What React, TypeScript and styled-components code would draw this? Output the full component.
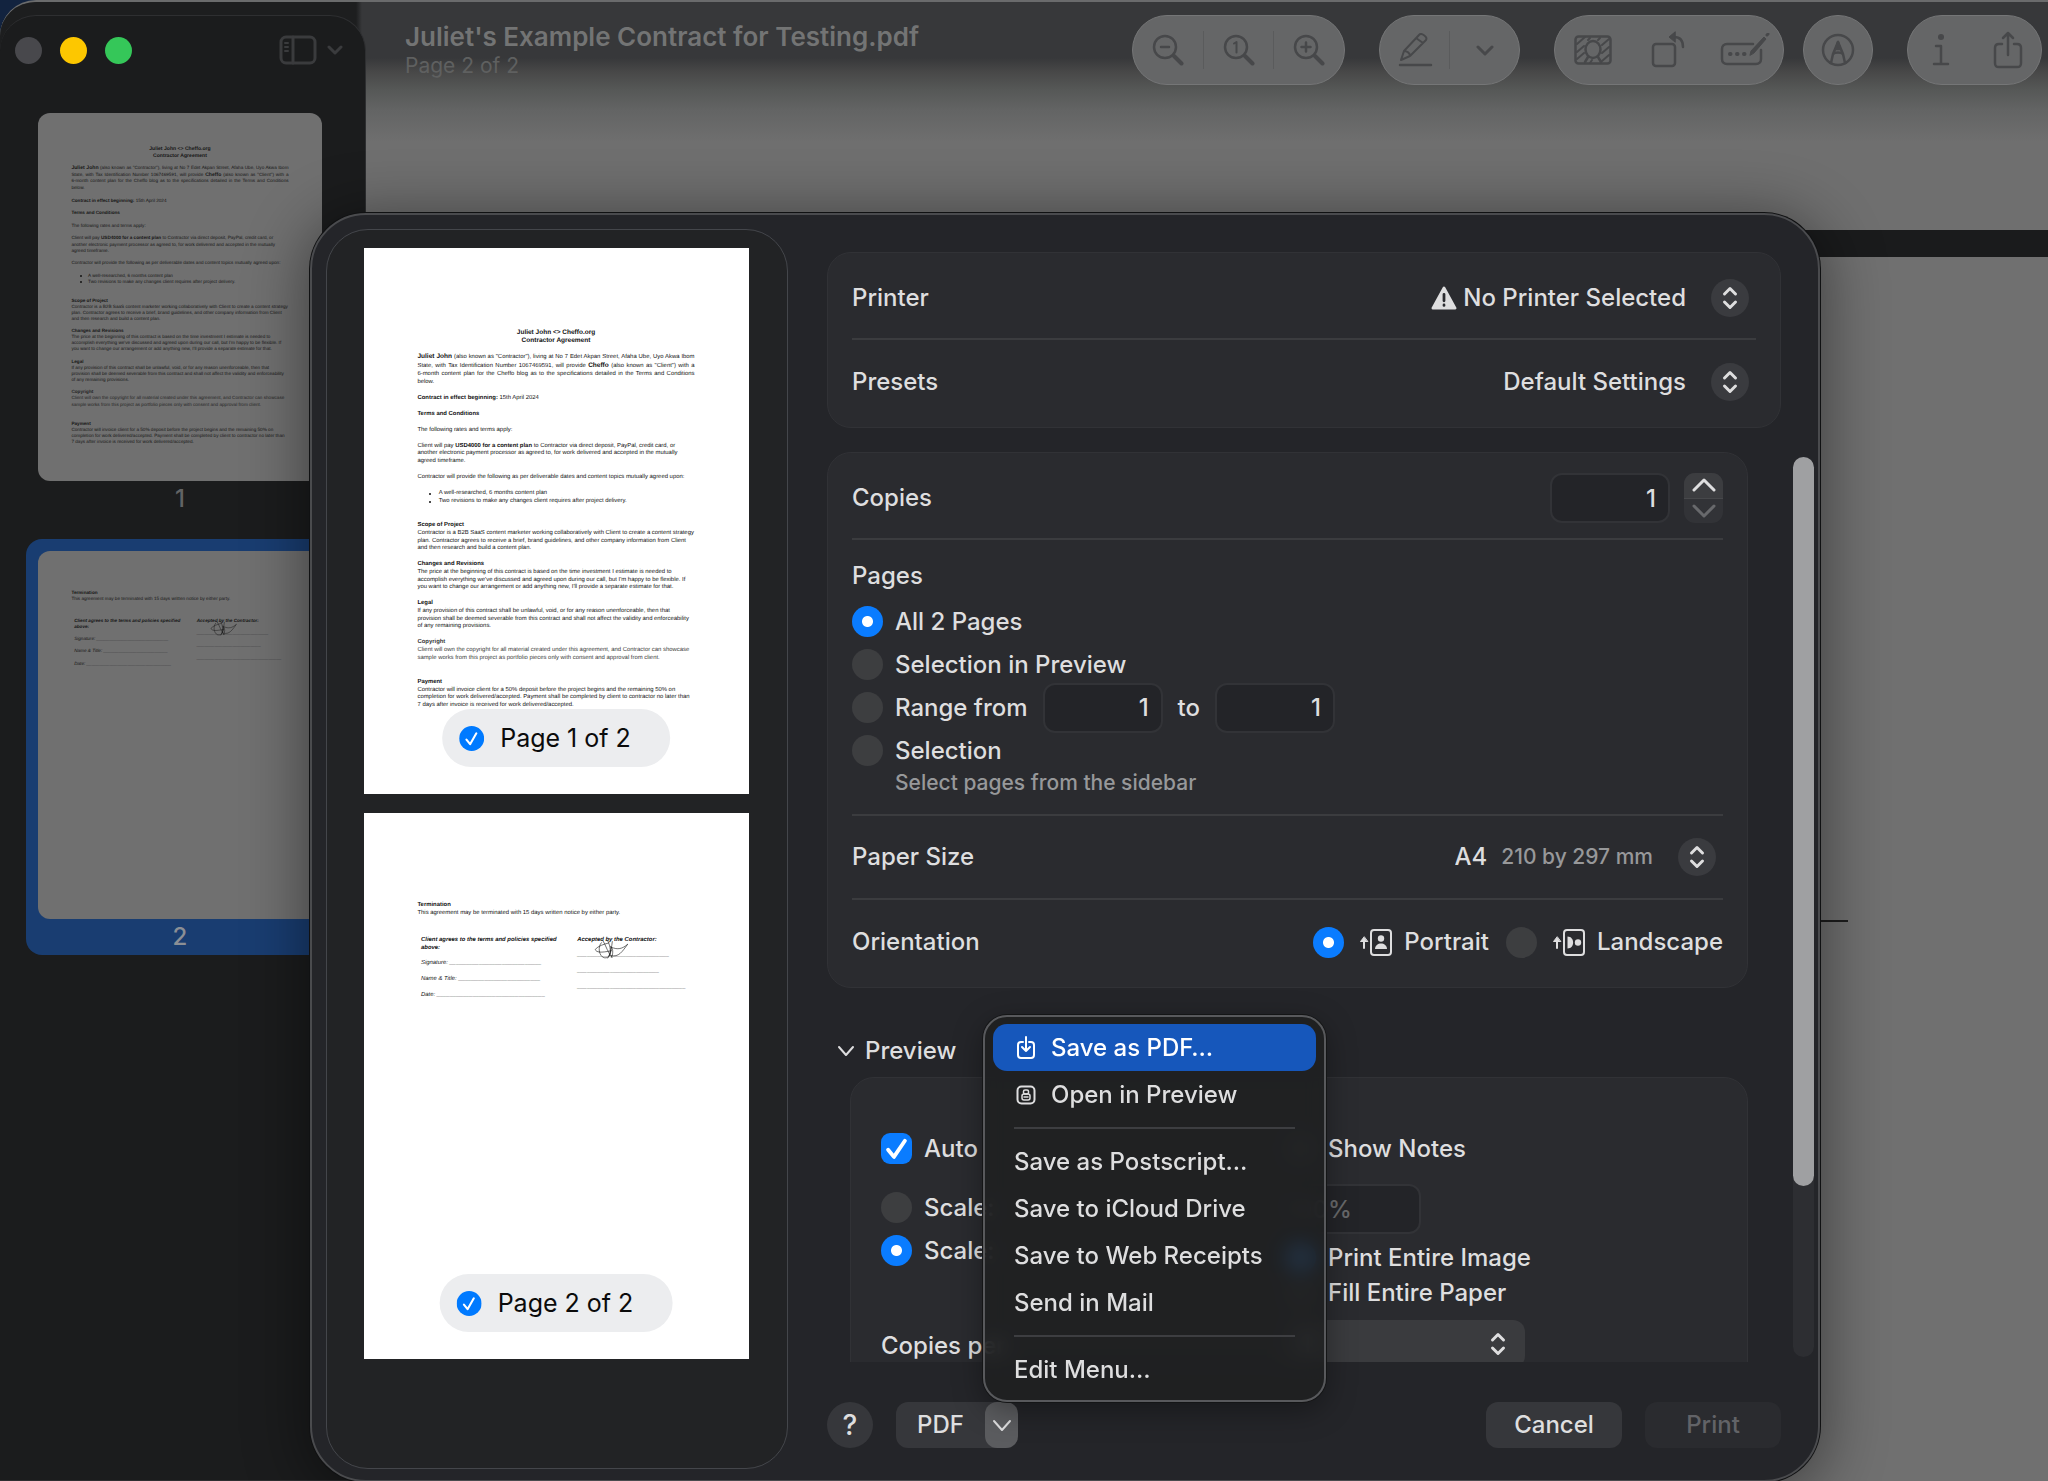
import React from 'react';
import styled, { createGlobalStyle, css } from 'styled-components';

const GlobalStyle = createGlobalStyle`
  *, *::before, *::after { box-sizing: border-box; }
  body { margin: 0; background: #12233f; }
  body, button, input, select {
    font-family: Inter, "Liberation Sans", sans-serif;
    font-size: 24px;
    line-height: 32px;
    font-weight: 500;
    color: #dededf;
  }
  button, input, select { margin: 0; padding: 0; border: 0; background: none; }
  svg { display: block; flex: none; }
`;

/* ---------- window ---------- */

const Screen = styled.div`
  position: relative;
  height: 100vh;
  overflow: hidden;
`;

const Window = styled.div`
  display: flex;
  height: 100%;
  overflow: hidden;
  border-top: 2px solid #6a6b6c;
  border-top-left-radius: 36px;
  background: #6f6f6f;
`;

const SidebarColumn = styled.div`
  flex: 0 0 366px;
  display: flex;
  padding-top: 13px;
  background: linear-gradient(90deg, #1d1e1f 0 356px, transparent 362px), linear-gradient(#37383a 0 58px, #6f6f6f 130px);
`;

const Sidebar = styled.nav`
  flex: 1;
  padding: 20px 0 0 15px;
  border: 1px solid #2e2f31;
  border-left: 0;
  border-radius: 36px 36px 0 0;
  background: #1b1c1d;
  display: flex;
  flex-direction: column;
`;

const SidebarHead = styled.div`
  display: flex;
  align-items: center;
  height: 28px;
  padding-right: 22px;
  gap: 18px;
`;

const Light = styled.button<{ $color: string }>`
  width: 27px;
  height: 27px;
  border-radius: 50%;
  background: ${(p) => p.$color};
`;

const SidebarToggle = styled.button`
  display: flex;
  align-items: center;
  gap: 10px;
  margin-left: auto;
  color: #3a3b3d;
`;

const Thumbs = styled.div`
  display: flex;
  flex-direction: column;
  gap: 22px;
  padding: 37px 0 0 11px;
`;

const Thumb = styled.button<{ $selected?: boolean }>`
  width: 308px;
  padding: 12px 12px 2px;
  border-radius: 16px;
  background: ${(p) => (p.$selected ? '#193d71' : 'transparent')};
  color: ${(p) => (p.$selected ? '#8b8f95' : '#626364')};
  text-align: center;
`;

const ThumbPage = styled.span`
  display: block;
  height: 368px;
  margin-bottom: 2px;
  border-radius: 12px;
  overflow: hidden;
  background: #707070;
  color: #161616;
  text-align: left;
`;

const Viewer = styled.main`
  flex: 1;
  min-width: 0;
  display: flex;
  flex-direction: column;
`;

const PageEnd = styled.div`
  height: 228px;
  background: linear-gradient(#37383a 0 56px, #484848 70px, #565857 88px, #636464 108px, #6f6f6f 140px);
`;

const PageGap = styled.div`
  height: 27px;
  background: #1a1b1c;
`;

const PageStart = styled.div`
  flex: 1;
  padding: 663px 200px 0 0;
  background: #707070;
`;

const SignatureRule = styled.div`
  height: 2px;
  background: #1d1d1d;
`;

const Toolbar = styled.header`
  display: flex;
  align-items: flex-start;
  gap: 34px;
  padding: 13px 6px 0 39px;
`;

const TitleBlock = styled.div`
  flex: 1;
  min-width: 0;
  padding-top: 6px;
`;

const Title = styled.h1`
  margin: 0;
  font-size: 26px;
  line-height: 32px;
  font-weight: 600;
  color: #737474;
  white-space: nowrap;
`;

const Subtitle = styled.p`
  margin: 0;
  font-size: 21px;
  line-height: 26px;
  font-weight: 400;
  color: #5f6060;
`;

const PillPair = styled.div`
  display: flex;
  gap: 19px;
`;

const Pill = styled.div<{ $width: number }>`
  display: flex;
  align-items: center;
  width: ${(p) => p.$width}px;
  height: 70px;
  border: 1px solid #757677;
  border-radius: 35px;
  background: #656667;
`;

const Tool = styled.button<{ $divided?: boolean }>`
  flex: 1;
  height: 38px;
  display: flex;
  align-items: center;
  justify-content: center;
  color: #47484a;
  border-left: ${(p) => (p.$divided ? '1px solid #5a5b5c' : '0')};
`;

/* ---------- document pages ---------- */

const Sheet = styled.span<{ $zoom: number }>`
  display: block;
  zoom: ${(p) => p.$zoom};
  position: relative;
  width: 1224px;
  height: 1584px;
  padding: 144px;
  font-family: "Liberation Sans", Arial, sans-serif;
  font-size: 20px;
  line-height: 26px;
  font-weight: 400;
  text-rendering: geometricPrecision;
  white-space: nowrap;
`;

const Heading = styled.span`
  display: block;
  margin-bottom: 26px;
  font-size: 22px;
  line-height: 28px;
  font-weight: 700;
  text-align: center;
`;

const Para = styled.span<{ $wide?: boolean; $light?: boolean }>`
  display: block;
  margin-bottom: ${(p) => (p.$wide ? 56 : 28)}px;
  ${(p) => p.$light && css`opacity: 0.85;`}
`;

const Intro = styled(Para)`
  line-height: 28px;
  b { font-size: 22px; }
`;

const DocLine = styled.span<{ $justify?: boolean }>`
  display: block;
  text-align-last: ${(p) => (p.$justify ? 'justify' : 'left')};
`;

const Bullet = styled.span`
  display: flex;
  align-items: center;
  gap: 26px;
  margin-left: 38px;
  &::before {
    content: '';
    width: 8px;
    height: 8px;
    border-radius: 50%;
    background: currentColor;
  }
`;

const SignBlock = styled.span`
  display: grid;
  grid-template-columns: 528px 1fr;
  padding: 38px 12px 0;
  font-style: italic;
`;

const SignRow = styled.span`
  display: block;
  margin-bottom: 27px;
`;

const Scribble = styled.svg`
  position: absolute;
  left: 740px;
  top: 300px;
`;

const ContractPage = ({ zoom }: { zoom: number }) => (
  <Sheet $zoom={zoom}>
    <Heading>Juliet John &lt;&gt; Cheffo.org<br />Contractor Agreement</Heading>
    <Intro>
      <DocLine $justify><b>Juliet John</b> (also known as "Contractor"), living at No 7 Edet Akpan Street, Afaha Ube, Uyo Akwa Ibom</DocLine>
      <DocLine $justify>State, with Tax Identification Number 1067469591, will provide <b>Cheffo</b> (also known as "Client") with a</DocLine>
      <DocLine $justify>6-month content plan for the Cheffo blog as to the specifications detailed in the Terms and Conditions</DocLine>
      <DocLine>below.</DocLine>
    </Intro>
    <Para><b>Contract in effect beginning:</b> 15th April 2024</Para>
    <Para><b>Terms and Conditions</b></Para>
    <Para>The following rates and terms apply:</Para>
    <Para>
      Client will pay <b>USD4000 for a content plan</b> to Contractor via direct deposit, PayPal, credit card, or<br />
      another electronic payment processor as agreed to, for work delivered and accepted in the mutually<br />
      agreed timeframe.
    </Para>
    <Para>Contractor will provide the following as per deliverable dates and content topics mutually agreed upon:</Para>
    <Para $wide>
      <Bullet>A well-researched, 6 months content plan</Bullet>
      <Bullet>Two revisions to make any changes client requires after project delivery.</Bullet>
    </Para>
    <Para>
      <b>Scope of Project</b><br />
      Contractor is a B2B SaaS content marketer working collaboratively with Client to create a content strategy<br />
      plan. Contractor agrees to receive a brief, brand guidelines, and other company information from Client<br />
      and then research and build a content plan.
    </Para>
    <Para>
      <b>Changes and Revisions</b><br />
      The price at the beginning of this contract is based on the time investment I estimate is needed to<br />
      accomplish everything we've discussed and agreed upon during our call, but I'm happy to be flexible. If<br />
      you want to change our arrangement or add anything new, I'll provide a separate estimate for that.
    </Para>
    <Para>
      <b>Legal</b><br />
      If any provision of this contract shall be unlawful, void, or for any reason unenforceable, then that<br />
      provision shall be deemed severable from this contract and shall not affect the validity and enforceability<br />
      of any remaining provisions.
    </Para>
    <Para $wide $light>
      <b>Copyright</b><br />
      Client will own the copyright for all material created under this agreement, and Contractor can showcase<br />
      sample works from this project as portfolio pieces only with consent and approval from client.
    </Para>
    <Para>
      <b>Payment</b><br />
      Contractor will invoice client for a 50% deposit before the project begins and the remaining 50% on<br />
      completion for work delivered/accepted. Payment shall be completed by client to contractor no later than<br />
      7 days after invoice is received for work delivered/accepted.
    </Para>
  </Sheet>
);

const blank = (n: number) => '_'.repeat(n);

const TerminationPage = ({ zoom }: { zoom: number }) => (
  <Sheet $zoom={zoom}>
    <br />
    <Para>
      <b>Termination</b><br />
      This agreement may be terminated with 15 days written notice by either party.
    </Para>
    <SignBlock>
      <span>
        <SignRow><b>Client agrees to the terms and policies specified<br />above:</b></SignRow>
        <SignRow>Signature: {blank(28)}</SignRow>
        <SignRow>Name &amp; Title: {blank(25)}</SignRow>
        <SignRow>Date: {blank(33)}</SignRow>
      </span>
      <span>
        <SignRow><b>Accepted by the Contractor:</b></SignRow>
        <SignRow>{blank(28)}</SignRow>
        <SignRow>{blank(25)}</SignRow>
        <SignRow>{blank(33)}</SignRow>
      </span>
    </SignBlock>
    <Scribble width="120" height="66" viewBox="0 0 120 66" fill="none" stroke="currentColor" strokeWidth="2">
      <path d="M26 8C12 22 16 54 34 60C54 64 60 40 56 20M4 32C14 20 34 14 50 10M4 32C8 42 22 44 60 36M30 2C40 18 48 46 62 60M46 2C56 22 60 46 46 62M62 4C60 24 56 44 50 54M58 60C64 52 66 30 58 24C80 34 96 30 114 14C96 38 84 60 56 52" />
    </Scribble>
  </Sheet>
);

/* ---------- print dialog ---------- */

const Overlay = styled.div`
  position: absolute;
  inset: 213px 228px -1px 310px;
  display: flex;
`;

const Dialog = styled.section`
  flex: 1;
  display: flex;
  min-width: 0;
  padding: 14px 4px 11px 14px;
  border: 2px solid #4a4b4e;
  border-radius: 56px;
  background: #242529;
  box-shadow: 0 0 0 1px #101112, 0 8px 60px 6px rgba(0, 0, 0, 0.42);
`;

const PreviewPane = styled.div`
  flex: 0 0 462px;
  display: flex;
  flex-direction: column;
  align-items: center;
  gap: 19px;
  padding: 18px 2px 0 0;
  border: 1px solid #44464b;
  border-radius: 42px;
  background: #222325;
`;

const PaperPage = styled.div`
  position: relative;
  flex: none;
  width: 385px;
  height: 546px;
  display: flex;
  align-items: center;
  justify-content: center;
  background: #fff;
  color: #111;
`;

const PageTag = styled.label`
  position: absolute;
  left: 50%;
  bottom: 27px;
  transform: translateX(-50%);
  display: flex;
  align-items: center;
  gap: 16px;
  height: 58px;
  padding: 0 39px 0 17px;
  border-radius: 29px;
  background: #ecedef;
  color: #0b0b0b;
  font-size: 25px;
  font-weight: 400;
  white-space: nowrap;
`;

const checkMark = (path: string) =>
  `url("data:image/svg+xml,%3Csvg xmlns='http://www.w3.org/2000/svg' viewBox='0 0 24 24' fill='none' stroke='white' stroke-linecap='round' stroke-linejoin='round' ${path}/%3E%3C/svg%3E")`;

const RoundCheck = styled.input`
  appearance: none;
  width: 25px;
  height: 25px;
  border-radius: 50%;
  background: #007aff ${checkMark("stroke-width='2'%3E%3Cpath d='M7 13l3.500 4.500L16.500 7'")} center / 100%;
`;

const Settings = styled.form`
  flex: 1;
  min-width: 0;
  display: flex;
  flex-direction: column;
  padding: 23px 0 21px 39px;
`;

const Card = styled.div`
  padding: 5px 24px 3px;
  border: 1px solid #313236;
  border-radius: 24px;
  background: #2a2b2f;
`;

const TopCard = styled(Card)`
  margin: 0 33px 24px 0;
`;

const Row = styled.div`
  display: flex;
  align-items: center;
  justify-content: space-between;
  min-height: 82px;
  * + & { min-height: 84px; }
  &:not(:last-child) { border-bottom: 2px solid #3b3c3f; }
`;

const PopUp = styled.span`
  display: flex;
  align-items: center;
  padding-right: 7px;
`;

const Select = styled.select`
  appearance: none;
  field-sizing: content;
  text-align-last: right;
`;

const Hint = styled.span`
  font-size: 21px;
  color: #97989a;
`;

const SelectHint = styled(Hint)`
  margin-left: 14px;
`;

const Knob = styled.span`
  display: flex;
  align-items: center;
  justify-content: center;
  width: 38px;
  height: 38px;
  margin-left: 25px;
  border-radius: 50%;
  background: #3a3b3f;
`;

const ScrollRegion = styled.div`
  flex: 1;
  min-height: 0;
  display: flex;
  gap: 45px;
`;

const ScrollContent = styled.div`
  flex: 1;
  min-width: 0;
  overflow: hidden;
`;

const ScrollTrack = styled.div`
  flex: 0 0 21px;
  margin: 5px 0;
  border-radius: 11px;
  background: #2d2e32;
`;

const ScrollThumb = styled.div`
  height: 81%;
  border-radius: 11px;
  background: #9fa0a2;
`;

const NumberField = styled.input<{ $width?: number }>`
  width: ${(p) => p.$width ?? 120}px;
  height: 50px;
  padding: 0 12px;
  border: 2px solid #323337;
  border-radius: 12px;
  background: #232428;
  text-align: right;
`;

const CopiesControls = styled.span`
  display: flex;
  gap: 14px;
`;

const Stepper = styled.span`
  display: flex;
  flex-direction: column;
  width: 39px;
  height: 50px;
  border-radius: 11px;
  overflow: hidden;
  background: #323337;
`;

const StepButton = styled.button`
  flex: 1;
  display: flex;
  align-items: center;
  justify-content: center;
  &:first-child { background: #3c3d40; color: #dededf; border-bottom: 1px solid #47484b; }
  &:last-child { color: #68696c; }
`;

const PagesGroup = styled.fieldset`
  margin: 0;
  padding: 20px 0;
  border: 0;
  border-bottom: 2px solid #3b3c3f;
`;

const Legend = styled.legend`
  float: left;
  width: 100%;
  height: 34px;
  margin-bottom: 6px;
  padding: 0;
  & + * { clear: both; }
`;

const Option = styled.label`
  display: flex;
  align-items: center;
  gap: 12px;
`;

const PageOption = styled.div`
  display: flex;
  align-items: center;
  gap: 15px;
  height: 43px;
`;

const OptionHint = styled(Hint)`
  display: block;
  height: 22px;
  line-height: 22px;
  padding-left: 43px;
`;

const Radio = styled.input`
  appearance: none;
  flex: none;
  width: 31px;
  height: 31px;
  border-radius: 50%;
  background: #3d3e40;
  &:checked { background: radial-gradient(circle, #fff 0 5px, #0a7cff 6px); }
`;

const Check = styled.input`
  appearance: none;
  flex: none;
  width: 31px;
  height: 31px;
  border-radius: 9px;
  background: #3d3e40;
  &:checked { background: #0a7cff ${checkMark("stroke-width='3'%3E%3Cpath d='M5.500 13l4.500 5.500L18.500 6'")} center / 100%; }
`;

const Orientations = styled.span`
  display: flex;
  gap: 17px;
`;

const OrientationOption = styled(Option)`
  svg { margin-left: 3px; }
`;

const Disclosure = styled.button`
  display: flex;
  align-items: center;
  gap: 10px;
  height: 40px;
  margin: 43px 0 6px 10px;
`;

const PreviewCard = styled(Card)`
  margin-left: 23px;
  padding: 47px 30px 40px;
  min-height: 400px;
  display: grid;
  grid-template-columns: 1fr 432px;
`;

const PreviewColumn = styled.div`
  display: flex;
  flex-direction: column;
  align-items: flex-start;
`;

const PreviewOption = styled(Option)<{ $height: number }>`
  height: ${(p) => p.$height}px;
`;

const FieldLine = styled.div<{ $height: number; $before?: number }>`
  display: flex;
  align-items: center;
  height: ${(p) => p.$height}px;
  margin-top: ${(p) => p.$before ?? 0}px;
`;

const PerPageLabel = styled.label`
  margin-top: 58px;
`;

const ScaleField = styled(NumberField)`
  padding: 0;
  color: #68696b;
  text-align: left;
`;

const CopiesSelectWrap = styled.span`
  position: relative;
  display: flex;
  align-items: center;
  width: 240px;
  height: 48px;
  border-radius: 12px;
  background: #3a3b3e;
`;

const CopiesSelect = styled.select`
  appearance: none;
  width: 100%;
  height: 100%;
  padding: 0 48px 0 16px;
`;

const SelectArrows = styled.span`
  position: absolute;
  right: 19px;
  pointer-events: none;
`;

const Footer = styled.footer`
  display: flex;
  align-items: center;
  gap: 23px;
  padding: 40px 33px 0 0;
`;

const Button = styled.button<{ $dim?: boolean }>`
  width: 136px;
  height: 46px;
  border-radius: 12px;
  background: ${(p) => (p.$dim ? '#2a2b2f' : '#36373b')};
  color: ${(p) => (p.$dim ? '#626367' : '#dededf')};
`;

const HelpButton = styled(Button)`
  width: 46px;
  border-radius: 50%;
  font-size: 28px;
`;

const SplitButton = styled.div`
  position: relative;
  display: flex;
  margin-right: auto;
  border-radius: 12px;
  background: #36373b;
`;

const SplitMain = styled.button`
  width: 89px;
  height: 46px;
  text-align: center;
`;

const SplitToggle = styled.button`
  display: flex;
  align-items: center;
  justify-content: center;
  width: 33px;
  height: 46px;
  border-radius: 12px;
  background: #5b5c5f;
`;

const Menu = styled.div`
  position: absolute;
  left: 87px;
  bottom: 46px;
  width: 343px;
  padding: 7px 8px;
  border: 2px solid #58595c;
  border-radius: 24px;
  background: rgba(30, 31, 33, 0.86);
  backdrop-filter: blur(10px);
  box-shadow: 0 0 0 1px #141516, 0 8px 30px rgba(0, 0, 0, 0.35);
`;

const MenuItem = styled.button<{ $active?: boolean }>`
  display: flex;
  align-items: center;
  gap: 15px;
  width: 100%;
  height: 47px;
  padding: 0 21px;
  border-radius: 14px;
  white-space: nowrap;
  ${(p) => p.$active && css`background: #1657bb; color: #fff;`}
`;

const MenuIcon = styled.span`
  margin-left: 2px;
`;

const MenuRule = styled.hr`
  height: 2px;
  margin: 9px 21px;
  border: 0;
  background: #3d3e41;
`;

/* ---------- icons ---------- */

type IconProps = { w: number; h: number; stroke?: number; children: React.ReactNode };
const Icon = ({ w, h, stroke = 2, children }: IconProps) => (
  <svg width={w} height={h} viewBox={`0 0 ${w} ${h}`} fill="none" stroke="currentColor" strokeWidth={stroke} strokeLinecap="round" strokeLinejoin="round" aria-hidden="true">
    {children}
  </svg>
);

const Chevron = ({ w = 16, h = 10, up = false, stroke = 2 }) => (
  <Icon w={w} h={h} stroke={stroke}>
    <path d={up ? `M2 ${h - 2}L${w / 2} 2L${w - 2} ${h - 2}` : `M2 2L${w / 2} ${h - 2}L${w - 2} 2`} />
  </Icon>
);

const UpDown = () => (
  <Icon w={16} h={24} stroke={3}>
    <path d="M2.500 8L8 2.500L13.500 8M2.500 16L8 21.500L13.500 16" />
  </Icon>
);

const Magnifier = ({ kind }: { kind: 'minus' | 'one' | 'plus' }) => (
  <Icon w={32} h={32} stroke={2}>
    <circle cx="13" cy="13" r="11" strokeWidth="2.500" />
    <path d="M22 22L29.500 29.500" strokeWidth="4" />
    {kind === 'minus' && <path d="M9 13H17" strokeWidth="2.500" />}
    {kind === 'plus' && <path d="M8.500 13H17.500M13 8.500V17.500" strokeWidth="2.500" />}
    {kind === 'one' && <path d="M11 9.500L13.500 8V18.500" />}
  </Icon>
);

const SidebarIcon = () => (
  <Icon w={38} h={30} stroke={3}>
    <rect x="2" y="2" width="34" height="26" rx="5" />
    <path d="M14 2V28" />
    <path d="M6 8H9M6 12H9M6 16H9" strokeWidth="2" />
  </Icon>
);

const PencilLine = () => (
  <Icon w={36} h={36} stroke={2}>
    <path d="M4 28L7 19L22 3C24 0 31 5 29 8L13 24L4 28M7 19C10 19 13 21 13 24M19 6L26 11" />
    <path d="M3 33H34" strokeWidth="2.500" />
  </Icon>
);

const PersonMask = () => (
  <Icon w={38} h={30} stroke={2.5}>
    <rect x="1.500" y="1.500" width="35" height="27" rx="3" />
    <ellipse cx="19" cy="14.500" rx="7.500" ry="8.500" />
    <path d="M14 22L11 27M24 22L27 27" />
    <path d="M3 9L11 2M3 17L10 11M16 3L14 5M26 3L24 5M35 4L28 10M3 24L10 18M35 12L28 18M16 28L18 25M35 20L28 26" strokeWidth="2" />
  </Icon>
);

const RotateIcon = () => (
  <Icon w={36} h={38} stroke={2.5}>
    <rect x="2" y="13" width="22" height="22" rx="3" />
    <path d="M23 6C30 6 32 10 32 16" />
    <path d="M24 1L18 6L24 11Z" fill="currentColor" strokeWidth="1" />
  </Icon>
);

const FormIcon = () => (
  <Icon w={50} h={34} stroke={2.5}>
    <path d="M33 11H7C4 11 2 13 2 16V26C2 29 4 31 7 31H36C39 31 41 29 41 26V17" />
    <path d="M30 22L31 18L44 4L46 6L34 20Z" fill="currentColor" strokeWidth="1" />
    <path d="M47 2L48 1" strokeWidth="3" />
    <path d="M10 21H10.500M17 21H17.500M24 21H24.500" strokeWidth="4" />
  </Icon>
);

const MarkupIcon = () => (
  <Icon w={34} h={34} stroke={2.5}>
    <circle cx="17" cy="17" r="15" />
    <path d="M10 30L12 21L17 9L22 21L24 30M12 21C14 19 20 19 22 21" />
    <path d="M15 16L17 9L19 16Z" fill="currentColor" />
  </Icon>
);

const InfoIcon = () => (
  <Icon w={20} h={34} stroke={2.5}>
    <circle cx="10" cy="4" r="1.800" fill="currentColor" />
    <path d="M5 13H10V31M3 31H17" />
  </Icon>
);

const ShareIcon = () => (
  <Icon w={30} h={38} stroke={2.5}>
    <path d="M9 13H6C3 13 2 15 2 17V32C2 35 3 36 6 36H24C27 36 28 35 28 32V17C28 15 27 13 24 13H21M15 24V2M10 7L15 2L20 7" />
  </Icon>
);

const WarningMark = styled.svg`
  margin-right: 6px;
`;

const WarningIcon = () => (
  <WarningMark width="26" height="24" viewBox="0 0 28 26" aria-hidden="true">
    <path d="M14 2L26 24H2Z" fill="#dededf" stroke="#dededf" strokeWidth="3" strokeLinejoin="round" />
    <path d="M14 9V16M14 20.500V21" stroke="#2a2b2f" strokeWidth="3" strokeLinecap="round" />
  </WarningMark>
);

const OrientationIcon = ({ landscape = false }) => (
  <Icon w={33} h={27} stroke={2}>
    <path d="M5 19V13" />
    <path d="M5 8L1.500 12.500H8.500Z" fill="currentColor" strokeWidth="1" />
    <rect x="12" y="1" width="20" height="25" rx="3" />
    <g transform={landscape ? 'rotate(90 22 13.500)' : undefined} fill="currentColor" stroke="none">
      <circle cx="22" cy="9.500" r="3.200" />
      <path d="M16 20C16 12.500 28 12.500 28 20Z" />
    </g>
  </Icon>
);

const SaveIcon = () => (
  <Icon w={20} h={24} stroke={2}>
    <path d="M7 6H5C3 6 2 7 2 9V19C2 21 3 22 5 22H15C17 22 18 21 18 19V9C18 7 17 6 15 6H13M10 1V15M6 11L10 15L14 11" />
  </Icon>
);

const PreviewAppIcon = () => (
  <Icon w={20} h={20} stroke={2}>
    <rect x="1.500" y="1.500" width="17" height="17" rx="4" />
    <rect x="7.500" y="5" width="5" height="4" rx="1.500" strokeWidth="1.500" />
    <rect x="6" y="9" width="8" height="6" rx="2" strokeWidth="1.500" />
    <path d="M8 12H12" strokeWidth="1.500" />
  </Icon>
);

/* ---------- app ---------- */

const menuTail = ['Save as Postscript…', 'Save to iCloud Drive', 'Save to Web Receipts', 'Send in Mail'];

export default function App() {
  return (
    <Screen>
      <GlobalStyle />
      <Window>
        <SidebarColumn>
          <Sidebar aria-label="Page thumbnails">
            <SidebarHead>
              <Light $color="#48484c" aria-label="Close" />
              <Light $color="#fdc700" aria-label="Minimise" />
              <Light $color="#35c759" aria-label="Zoom window" />
              <SidebarToggle aria-label="Sidebar options">
                <SidebarIcon />
                <Chevron stroke={3} />
              </SidebarToggle>
            </SidebarHead>
            <Thumbs>
              <Thumb>
                <ThumbPage><ContractPage zoom={0.232} /></ThumbPage>
                1
              </Thumb>
              <Thumb $selected>
                <ThumbPage><TerminationPage zoom={0.232} /></ThumbPage>
                2
              </Thumb>
            </Thumbs>
          </Sidebar>
        </SidebarColumn>
        <Viewer>
          <PageEnd>
            <Toolbar>
              <TitleBlock>
                <Title>Juliet's Example Contract for Testing.pdf</Title>
                <Subtitle>Page 2 of 2</Subtitle>
              </TitleBlock>
              <Pill $width={213}>
                <Tool aria-label="Zoom out"><Magnifier kind="minus" /></Tool>
                <Tool $divided aria-label="Actual size"><Magnifier kind="one" /></Tool>
                <Tool $divided aria-label="Zoom in"><Magnifier kind="plus" /></Tool>
              </Pill>
              <Pill $width={141}>
                <Tool aria-label="Highlight"><PencilLine /></Tool>
                <Tool $divided aria-label="Highlight colour"><Chevron w={18} h={11} stroke={3} /></Tool>
              </Pill>
              <PillPair>
                <Pill $width={230}>
                  <Tool aria-label="Remove background"><PersonMask /></Tool>
                  <Tool aria-label="Rotate"><RotateIcon /></Tool>
                  <Tool aria-label="Fill in form"><FormIcon /></Tool>
                </Pill>
                <Pill $width={70}>
                  <Tool aria-label="Markup"><MarkupIcon /></Tool>
                </Pill>
              </PillPair>
              <Pill $width={135}>
                <Tool aria-label="Info"><InfoIcon /></Tool>
                <Tool aria-label="Share"><ShareIcon /></Tool>
              </Pill>
            </Toolbar>
          </PageEnd>
          <PageGap />
          <PageStart><SignatureRule /></PageStart>
        </Viewer>
      </Window>

      <Overlay>
        <Dialog role="dialog" aria-label="Print">
          <PreviewPane>
            <PaperPage>
              <ContractPage zoom={0.296} />
              <PageTag><RoundCheck type="checkbox" defaultChecked />Page 1 of 2</PageTag>
            </PaperPage>
            <PaperPage>
              <TerminationPage zoom={0.296} />
              <PageTag><RoundCheck type="checkbox" defaultChecked />Page 2 of 2</PageTag>
            </PaperPage>
          </PreviewPane>

          <Settings onSubmit={(e) => e.preventDefault()}>
            <TopCard>
              <Row>
                <label htmlFor="printer">Printer</label>
                <PopUp>
                  <WarningIcon />
                  <Select id="printer"><option>No Printer Selected</option></Select>
                  <Knob><UpDown /></Knob>
                </PopUp>
              </Row>
              <Row>
                <label htmlFor="presets">Presets</label>
                <PopUp>
                  <Select id="presets"><option>Default Settings</option></Select>
                  <Knob><UpDown /></Knob>
                </PopUp>
              </Row>
            </TopCard>

            <ScrollRegion>
              <ScrollContent>
                <Card>
                  <Row>
                    <label htmlFor="copies">Copies</label>
                    <CopiesControls>
                      <NumberField id="copies" defaultValue="1" inputMode="numeric" />
                      <Stepper>
                        <StepButton type="button" aria-label="More copies"><Chevron w={24} h={14} up stroke={3} /></StepButton>
                        <StepButton type="button" aria-label="Fewer copies"><Chevron w={24} h={14} stroke={3} /></StepButton>
                      </Stepper>
                    </CopiesControls>
                  </Row>
                  <PagesGroup>
                    <Legend>Pages</Legend>
                    <PageOption><Option><Radio type="radio" name="pages" defaultChecked />All 2 Pages</Option></PageOption>
                    <PageOption><Option><Radio type="radio" name="pages" />Selection in Preview</Option></PageOption>
                    <PageOption>
                      <Option><Radio type="radio" name="pages" />Range from</Option>
                      <NumberField defaultValue="1" aria-label="First page" inputMode="numeric" />
                      <label htmlFor="last-page">to</label>
                      <NumberField id="last-page" defaultValue="1" inputMode="numeric" />
                    </PageOption>
                    <PageOption><Option><Radio type="radio" name="pages" />Selection</Option></PageOption>
                    <OptionHint>Select pages from the sidebar</OptionHint>
                  </PagesGroup>
                  <Row>
                    <label htmlFor="paper">Paper Size</label>
                    <PopUp>
                      <Select id="paper"><option>A4</option></Select>
                      <SelectHint>210 by 297 mm</SelectHint>
                      <Knob><UpDown /></Knob>
                    </PopUp>
                  </Row>
                  <Row>
                    <span>Orientation</span>
                    <Orientations>
                      <OrientationOption><Radio type="radio" name="orientation" defaultChecked /><OrientationIcon />Portrait</OrientationOption>
                      <OrientationOption><Radio type="radio" name="orientation" /><OrientationIcon landscape />Landscape</OrientationOption>
                    </Orientations>
                  </Row>
                </Card>

                <Disclosure type="button" aria-expanded="true"><Chevron w={18} h={12} />Preview</Disclosure>
                <PreviewCard>
                  <PreviewColumn>
                    <PreviewOption $height={47}><Check type="checkbox" defaultChecked />Auto</PreviewOption>
                    <FieldLine $height={14} />
                    <PreviewOption $height={43}><Radio type="radio" name="scale" />Scale:</PreviewOption>
                    <PreviewOption $height={43}><Radio type="radio" name="scale" defaultChecked />Scale:</PreviewOption>
                    <PerPageLabel htmlFor="per-page">Copies per</PerPageLabel>
                  </PreviewColumn>
                  <PreviewColumn>
                    <PreviewOption $height={47}><Check type="checkbox" />Show Notes</PreviewOption>
                    <FieldLine $height={62} $before={6}>
                      <ScaleField $width={136} defaultValue="100%" aria-label="Scale percentage" disabled />
                    </FieldLine>
                    <PreviewOption $height={35}><Radio type="radio" name="fit" defaultChecked />Print Entire Image</PreviewOption>
                    <PreviewOption $height={35}><Radio type="radio" name="fit" />Fill Entire Paper</PreviewOption>
                    <FieldLine $height={68}>
                      <CopiesSelectWrap>
                        <CopiesSelect id="per-page"><option>1</option></CopiesSelect>
                        <SelectArrows><UpDown /></SelectArrows>
                      </CopiesSelectWrap>
                    </FieldLine>
                  </PreviewColumn>
                </PreviewCard>
              </ScrollContent>
              <ScrollTrack><ScrollThumb /></ScrollTrack>
            </ScrollRegion>

            <Footer>
              <HelpButton type="button" aria-label="Help">?</HelpButton>
              <SplitButton>
                <SplitMain type="button">PDF</SplitMain>
                <SplitToggle type="button" aria-label="PDF options" aria-expanded="true"><Chevron w={20} h={13} /></SplitToggle>
                <Menu role="menu">
                  <MenuItem type="button" role="menuitem" $active><MenuIcon><SaveIcon /></MenuIcon>Save as PDF…</MenuItem>
                  <MenuItem type="button" role="menuitem"><MenuIcon><PreviewAppIcon /></MenuIcon>Open in Preview</MenuItem>
                  <MenuRule />
                  {menuTail.map((label) => (
                    <MenuItem key={label} type="button" role="menuitem">{label}</MenuItem>
                  ))}
                  <MenuRule />
                  <MenuItem type="button" role="menuitem">Edit Menu…</MenuItem>
                </Menu>
              </SplitButton>
              <Button type="button">Cancel</Button>
              <Button type="submit" $dim disabled>Print</Button>
            </Footer>
          </Settings>
        </Dialog>
      </Overlay>
    </Screen>
  );
}
